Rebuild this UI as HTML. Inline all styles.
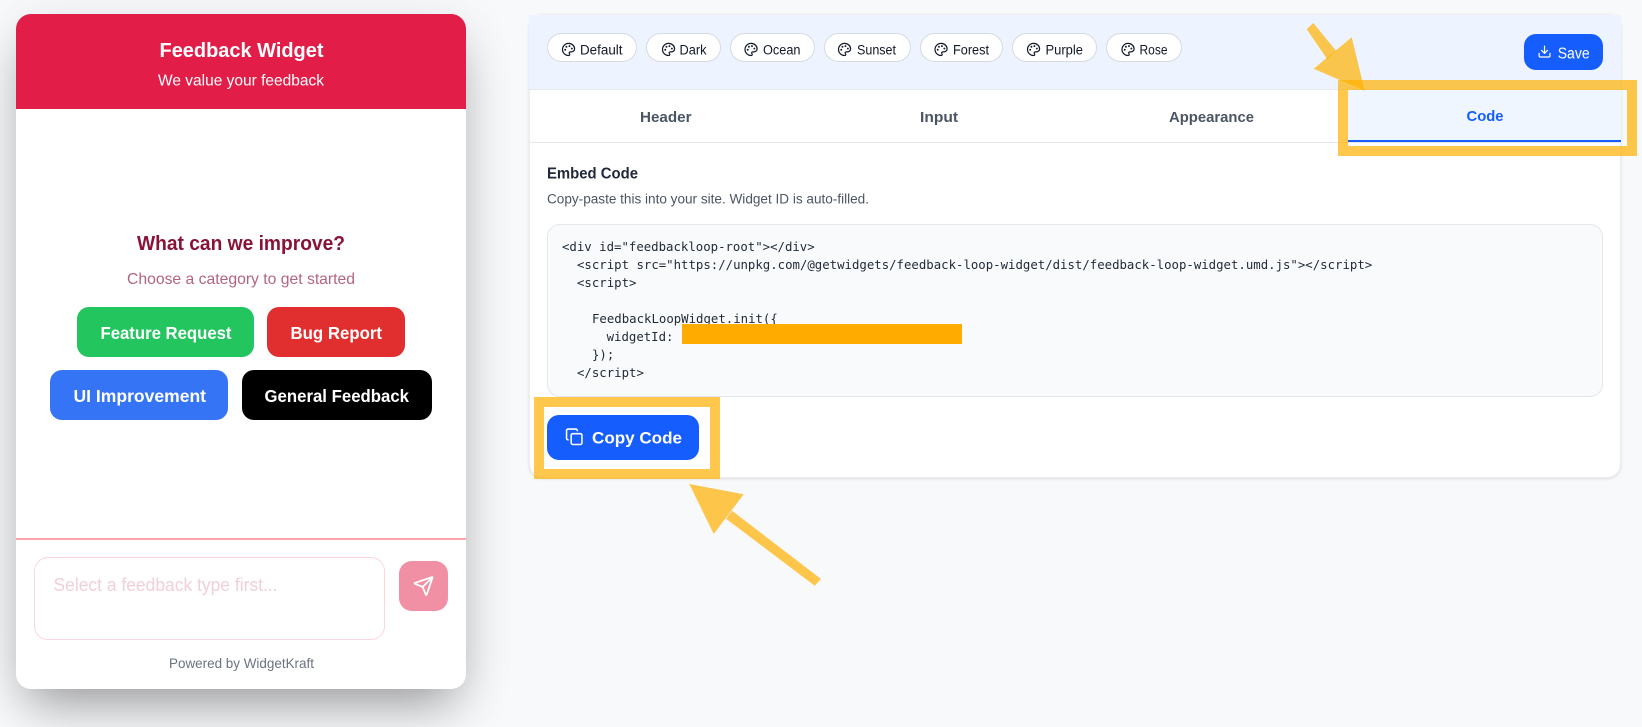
<!DOCTYPE html>
<html lang="en">
<head>
<meta charset="utf-8">
<title>Feedback Widget</title>
<style>
html,body{margin:0;padding:0;width:1642px;height:727px;overflow:hidden;background:#f8f9fb;font-family:"Liberation Sans",sans-serif}
.b{position:absolute;box-sizing:border-box}
.pill{position:absolute;top:33px;height:29px;box-sizing:border-box;background:#fff;border:1px solid #d6dae2;border-radius:15px}
svg.t{position:absolute;left:0;top:0;width:1642px;height:727px}
text{font-family:"Liberation Sans",sans-serif}
text.mono{font-family:"DejaVu Sans Mono",monospace;font-size:12.35px;fill:#1f2937}
.pt{font-size:13.5px;fill:#111827}
.tab{font-size:15px;font-weight:700;fill:#4b5563}
.ic{fill:none;stroke-linecap:round;stroke-linejoin:round;stroke-width:2}
</style>
</head>
<body>
<!-- Widget -->
<div class="b" style="left:16px;top:14px;width:450px;height:675px;background:#fff;border-radius:15px;box-shadow:0 25px 50px -12px rgba(0,0,0,.36),0 10px 60px rgba(0,0,0,.07)"></div>
<div class="b" style="left:16px;top:14px;width:450px;height:95px;background:#e11d48;border-radius:15px 15px 0 0"></div>
<div class="b" style="left:77px;top:307px;width:177px;height:50px;background:#22c55e;border-radius:12px"></div>
<div class="b" style="left:267px;top:307px;width:138px;height:50px;background:#e12f2f;border-radius:12px"></div>
<div class="b" style="left:50px;top:370px;width:178px;height:50px;background:#3575f5;border-radius:12px"></div>
<div class="b" style="left:242px;top:370px;width:190px;height:50px;background:#000;border-radius:12px"></div>
<div class="b" style="left:16px;top:538px;width:450px;height:1.5px;background:#fda4af"></div>
<div class="b" style="left:34px;top:557px;width:351px;height:83px;background:#fff;border:1.3px solid #fdd5dc;border-radius:14px"></div>
<div class="b" style="left:399px;top:561px;width:49px;height:50px;background:#f18fa4;border-radius:13px"></div>

<!-- Panel -->
<div class="b" style="left:529px;top:14px;width:1092px;height:464px;background:#fff;border:1px solid #eceef1;border-radius:14px;box-shadow:0 1px 3px rgba(0,0,0,.12)"></div>
<div class="b" style="left:529px;top:15px;width:1092px;height:75px;background:#eef4ff;border-bottom:1px solid #e5e7eb"></div>
<div class="b" style="left:529px;top:142px;width:1092px;height:1px;background:#e5e7eb"></div>
<div class="b" style="left:1348px;top:90px;width:273px;height:52px;background:#eff6ff;border-bottom:2px solid #155dfc"></div>
<div class="pill" style="left:547px;width:90px"></div>
<div class="pill" style="left:646px;width:75px"></div>
<div class="pill" style="left:730px;width:85px"></div>
<div class="pill" style="left:824px;width:87px"></div>
<div class="pill" style="left:920px;width:83px"></div>
<div class="pill" style="left:1012px;width:85px"></div>
<div class="pill" style="left:1106px;width:76px"></div>
<div class="b" style="left:1524px;top:34px;width:79px;height:36px;background:#155dfc;border-radius:12px"></div>
<div class="b" style="left:547px;top:224px;width:1056px;height:173px;background:#f9fafb;border:1px solid #e5e7eb;border-radius:13px"></div>
<div class="b" style="left:547px;top:415px;width:152px;height:45px;background:#155dfc;border-radius:12px"></div>

<svg class="t" viewBox="0 0 1642 727" xmlns="http://www.w3.org/2000/svg">
  <defs>
    <g id="pal">
      <path d="M12 22a1 1 0 0 1 0-20 10 9 0 0 1 10 9 5 5 0 0 1-5 5h-2.25a1.75 1.75 0 0 0-1.4 2.8l.3.4a1.75 1.75 0 0 1-1.4 2.8z"/>
      <circle cx="13.5" cy="6.5" r=".6" fill="currentColor"/>
      <circle cx="17.5" cy="10.5" r=".6" fill="currentColor"/>
      <circle cx="6.5" cy="12.5" r=".6" fill="currentColor"/>
      <circle cx="8.5" cy="7.5" r=".6" fill="currentColor"/>
    </g>
  </defs>

  <!-- Widget text -->
  <text x="159.5" y="57" font-size="20" font-weight="700" fill="#fff" textLength="164" lengthAdjust="spacingAndGlyphs">Feedback Widget</text>
  <text x="158" y="85.5" font-size="16" fill="#fff" textLength="166" lengthAdjust="spacingAndGlyphs">We value your feedback</text>
  <text x="137" y="250" font-size="20" font-weight="700" fill="#881337" textLength="208" lengthAdjust="spacingAndGlyphs">What can we improve?</text>
  <text x="127" y="284" font-size="16" fill="#b5647f" textLength="228" lengthAdjust="spacingAndGlyphs">Choose a category to get started</text>
  <text x="100.5" y="339" font-size="17.5" font-weight="700" fill="#fff" textLength="131" lengthAdjust="spacingAndGlyphs">Feature Request</text>
  <text x="290.5" y="339" font-size="17.5" font-weight="700" fill="#fff" textLength="91.5" lengthAdjust="spacingAndGlyphs">Bug Report</text>
  <text x="73.5" y="402" font-size="17.5" font-weight="700" fill="#fff" textLength="132.5" lengthAdjust="spacingAndGlyphs">UI Improvement</text>
  <text x="264.5" y="402" font-size="17.5" font-weight="700" fill="#fff" textLength="144.5" lengthAdjust="spacingAndGlyphs">General Feedback</text>
  <text x="53.5" y="591" font-size="18" fill="#f0cfdb" textLength="224" lengthAdjust="spacingAndGlyphs">Select a feedback type first...</text>
  <text x="169" y="668" font-size="14" fill="#6b7280" textLength="145" lengthAdjust="spacingAndGlyphs">Powered by WidgetKraft</text>
  <svg x="412.8" y="575.3" width="21.5" height="21.5" viewBox="0 0 24 24" class="ic" stroke="#fff">
    <path d="M14.536 21.686a.5.5 0 0 0 .937-.024l6.5-19a.496.496 0 0 0-.635-.635l-19 6.5a.5.5 0 0 0-.024.937l7.93 3.18a2 2 0 0 1 1.112 1.11z"/>
    <path d="m21.854 2.147-10.94 10.939"/>
  </svg>

  <!-- Theme pills -->
  <g color="#111827" stroke="#111827">
    <svg x="561.3" y="42.2" width="14.5" height="14.5" viewBox="0 0 24 24" class="ic"><use href="#pal"/></svg>
    <svg x="661.3" y="42.2" width="14.5" height="14.5" viewBox="0 0 24 24" class="ic"><use href="#pal"/></svg>
    <svg x="743.8" y="42.2" width="14.5" height="14.5" viewBox="0 0 24 24" class="ic"><use href="#pal"/></svg>
    <svg x="837.3" y="42.2" width="14.5" height="14.5" viewBox="0 0 24 24" class="ic"><use href="#pal"/></svg>
    <svg x="933.8" y="42.2" width="14.5" height="14.5" viewBox="0 0 24 24" class="ic"><use href="#pal"/></svg>
    <svg x="1026.3" y="42.2" width="14.5" height="14.5" viewBox="0 0 24 24" class="ic"><use href="#pal"/></svg>
    <svg x="1120.8" y="42.2" width="14.5" height="14.5" viewBox="0 0 24 24" class="ic"><use href="#pal"/></svg>
  </g>
  <text class="pt" x="580" y="54.3" textLength="42.5" lengthAdjust="spacingAndGlyphs">Default</text>
  <text class="pt" x="679.5" y="54.3" textLength="27" lengthAdjust="spacingAndGlyphs">Dark</text>
  <text class="pt" x="763" y="54.3" textLength="37.5" lengthAdjust="spacingAndGlyphs">Ocean</text>
  <text class="pt" x="857" y="54.3" textLength="39" lengthAdjust="spacingAndGlyphs">Sunset</text>
  <text class="pt" x="953" y="54.3" textLength="36" lengthAdjust="spacingAndGlyphs">Forest</text>
  <text class="pt" x="1045.5" y="54.3" textLength="37.5" lengthAdjust="spacingAndGlyphs">Purple</text>
  <text class="pt" x="1139.5" y="54.3" textLength="28" lengthAdjust="spacingAndGlyphs">Rose</text>

  <!-- Save -->
  <svg x="1537.3" y="44.3" width="14.5" height="14.5" viewBox="0 0 24 24" class="ic" stroke="#fff">
    <path d="M12 15V3"/><path d="M21 15v4a2 2 0 0 1-2 2H5a2 2 0 0 1-2-2v-4"/><path d="m7 10 5 5 5-5"/>
  </svg>
  <text x="1557.7" y="58.3" font-size="15.5" fill="#fff" textLength="32" lengthAdjust="spacingAndGlyphs">Save</text>

  <!-- Tabs -->
  <text class="tab" x="640" y="122" textLength="51.5" lengthAdjust="spacingAndGlyphs">Header</text>
  <text class="tab" x="920" y="122" textLength="38" lengthAdjust="spacingAndGlyphs">Input</text>
  <text class="tab" x="1169" y="122" textLength="85" lengthAdjust="spacingAndGlyphs">Appearance</text>
  <text class="tab" x="1466.5" y="121" textLength="37" lengthAdjust="spacingAndGlyphs" style="fill:#155dfc">Code</text>

  <!-- Embed -->
  <text x="547" y="178.3" font-size="15.5" font-weight="700" fill="#1f2937" textLength="91" lengthAdjust="spacingAndGlyphs">Embed Code</text>
  <text x="547" y="203.3" font-size="13.5" fill="#4b5563" textLength="322" lengthAdjust="spacingAndGlyphs">Copy-paste this into your site. Widget ID is auto-filled.</text>

  <!-- Code -->
  <text class="mono" x="562" y="251">&lt;div id="feedbackloop-root"&gt;&lt;/div&gt;</text>
  <text class="mono" x="577" y="269">&lt;script src="https://unpkg.com/@getwidgets/feedback-loop-widget/dist/feedback-loop-widget.umd.js"&gt;&lt;/script&gt;</text>
  <text class="mono" x="577" y="287">&lt;script&gt;</text>
  <text class="mono" x="592" y="323">FeedbackLoopWidget.init({</text>
  <text class="mono" x="606.6" y="341">widgetId:</text>
  <text class="mono" x="592" y="359">});</text>
  <text class="mono" x="577" y="377">&lt;/script&gt;</text>
  <rect x="682" y="324" width="280" height="20" fill="#ffab00"/>

  <!-- Copy button -->
  <svg x="565" y="427.5" width="18.5" height="18.5" viewBox="0 0 24 24" class="ic" stroke="#fff">
    <rect x="8" y="8" width="14" height="14" rx="2" ry="2"/>
    <path d="M4 16c-1.1 0-2-.9-2-2V4c0-1.1.9-2 2-2h10c1.1 0 2 .9 2 2"/>
  </svg>
  <text x="592" y="443.5" font-size="16.5" font-weight="700" fill="#fff" textLength="90" lengthAdjust="spacingAndGlyphs">Copy Code</text>

  <!-- Annotations -->
  <g fill="rgba(255,176,0,.7)">
    <path fill-rule="evenodd" d="M1338 80H1637V156H1338ZM1348 90V146H1627V90Z"/>
    <path d="M1306.7 29.3L1313.3 23L1336 50.7L1327.3 59.3Z"/>
    <path d="M1364.7 90.7L1351.7 37.3L1313.7 68.7Z"/>
    <path fill-rule="evenodd" d="M534 397H720V479H534ZM544 407V469H710V407Z"/>
    <path d="M689.3 484L743.7 494.3L713.7 534Z"/>
    <path d="M732 510.7L821 579L814.7 585.7L726 518.7Z"/>
  </g>
</svg>
</body>
</html>
